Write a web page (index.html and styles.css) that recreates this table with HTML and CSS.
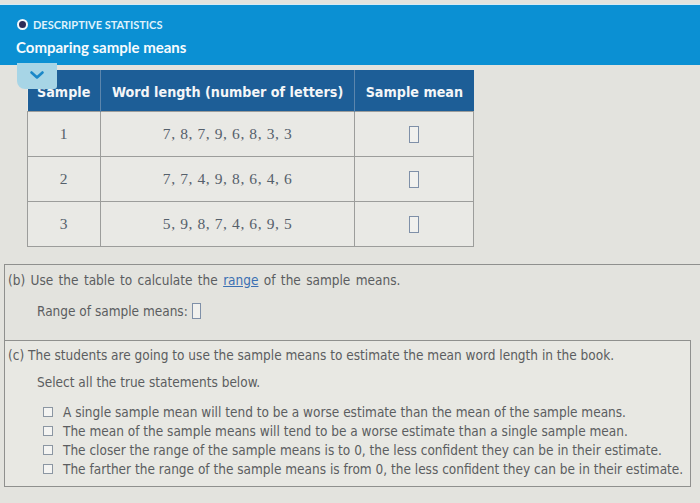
FILE: index.html
```html
<!DOCTYPE html>
<html>
<head>
<meta charset="utf-8">
<link rel="stylesheet" href="styles.css">
</head>
<body>
<header class="topbar">
  <div class="crumb"><span class="dot"></span><span class="topic">DESCRIPTIVE STATISTICS</span></div>
  <h1 class="title">Comparing sample means</h1>
</header>
<main class="content">
  <div class="table-wrap">
    <div class="tab">
      <svg width="14" height="8" viewBox="0 0 14 8"><path d="M1.5 1.5 L7 6.5 L12.5 1.5" fill="none" stroke="#1b88c8" stroke-width="2.6" stroke-linecap="round" stroke-linejoin="round"/></svg>
    </div>
    <table class="data">
      <thead>
        <tr><th class="c1">Sample</th><th class="c2">Word length (number of letters)</th><th class="c3">Sample mean</th></tr>
      </thead>
      <tbody>
        <tr><td>1</td><td>7, 8, 7, 9, 6, 8, 3, 3</td><td><span class="ans"></span></td></tr>
        <tr><td>2</td><td>7, 7, 4, 9, 8, 6, 4, 6</td><td><span class="ans"></span></td></tr>
        <tr><td>3</td><td>5, 9, 8, 7, 4, 6, 9, 5</td><td><span class="ans"></span></td></tr>
      </tbody>
    </table>
  </div>
  <section class="part part-b">
    <p class="q">(b) Use the table to calculate the <a class="link">range</a> of the sample means.</p>
    <p class="sub">Range of sample means: <span class="ans inline"></span></p>
  </section>
  <section class="part part-c">
    <p class="q">(c) The students are going to use the sample means to estimate the mean word length in the book.</p>
    <p class="sub">Select all the true statements below.</p>
    <ul class="opts">
      <li><span class="box"></span>A single sample mean will tend to be a worse estimate than the mean of the sample means.</li>
      <li><span class="box"></span>The mean of the sample means will tend to be a worse estimate than a single sample mean.</li>
      <li><span class="box"></span>The closer the range of the sample means is to 0, the less confident they can be in their estimate.</li>
      <li><span class="box"></span>The farther the range of the sample means is from 0, the less confident they can be in their estimate.</li>
    </ul>
  </section>
</main>
</body>
</html>
```
FILE: styles.css
```css
* { box-sizing: border-box; }
html, body { margin: 0; padding: 0; }
body {
  width: 700px;
  height: 503px;
  overflow: hidden;
  background: #e3e3de;
  font-family: "DejaVu Sans Condensed", "DejaVu Sans", sans-serif;
  color: #5b5d60;
}
.topbar {
  margin-top: 4px;
  height: 61px;
  background: #0b90d3;
  border-top: 1px solid #d6eaf3;
  padding: 12px 0 0 17px;
}
.crumb { display: flex; align-items: center; height: 14px; }
.dot {
  width: 11px; height: 11px; border-radius: 50%;
  background: #2c2b58; border: 2px solid #f4f8fb;
  margin-right: 5px;
}
.topic {
  font-family: Lato, sans-serif;
  font-weight: 700;
  font-size: 11px;
  color: #dff2fb;
  letter-spacing: 0;
}
.title {
  margin: 6px 0 0 -1px;
  font-family: Lato, sans-serif;
  font-weight: 700;
  font-size: 15px;
  color: #f7fbfd;
  line-height: 20px;
}
.content { padding-top: 5px; }
.table-wrap { position: relative; margin-left: 27px; width: 447px; }
.tab {
  position: absolute;
  left: -10px; top: -7px;
  width: 40px; height: 26px;
  background: #a7d5e6;
  border-radius: 0 0 3px 8px;
  display: flex; justify-content: center; align-items: center;
  padding-bottom: 2px;
  z-index: 2;
}
.data {
  border-collapse: collapse;
  width: 447px;
  background: #e9e9e5;
}
.data th {
  background: #1d5e97;
  color: #f4f6f8;
  font-family: "DejaVu Sans Condensed", "DejaVu Sans", sans-serif;
  font-weight: 700;
  font-size: 14.2px;
  height: 41px;
  padding: 3px 0 0 0;
  border-left: 1px solid #5c86ad;
  text-align: center;
}
.data th:first-child { border-left: none; }
.c1 { width: 73px; }
.c2 { width: 255px; }
.c3 { width: 119px; }
.data td {
  border: 1px solid #9c9d9b;
  height: 45px;
  text-align: center;
  font-family: "Liberation Serif", serif;
  font-size: 15.5px;
  letter-spacing: 0.6px;
  color: #55606b;
  padding: 0;
}
.ans {
  display: inline-block;
  width: 10px; height: 17px;
  border: 1.5px solid #7f90a8;
  vertical-align: middle;
  background: #f1f1ee;
}
.part { font-size: 13.5px; line-height: 16px; }
.part p { margin: 0; }
.part-b {
  margin-top: 17px;
  margin-left: 4px;
  height: 76px;
  border-top: 1.5px solid #8f908e;
  border-left: 1.5px solid #8f908e;
  padding: 7px 0 0 3px;
}
.part-b .q { word-spacing: 1.5px; }
.link { color: #3b70b2; text-decoration: underline; }
.part-b .sub { margin-top: 15px; padding-left: 29px; display: flex; align-items: center; }
.ans.inline { width: 9px; height: 16px; margin-left: 4px; }
.part-c {
  margin-left: 4px;
  width: 687px;
  border: 1.5px solid #8f908e;
  padding: 6px 0 7px 3px;
  background: #e8e8e3;
}
.part-c .sub { margin-top: 11px; padding-left: 29px; }
.opts { list-style: none; margin: 13px 0 0 0; padding: 0 0 0 35px; }
.opts li { display: flex; align-items: center; height: 19px; }
.box {
  width: 10px; height: 10px;
  border: 1px solid #8b96a2;
  background: #f4f4f2;
  margin-right: 10px;
  flex: none;
}
```
